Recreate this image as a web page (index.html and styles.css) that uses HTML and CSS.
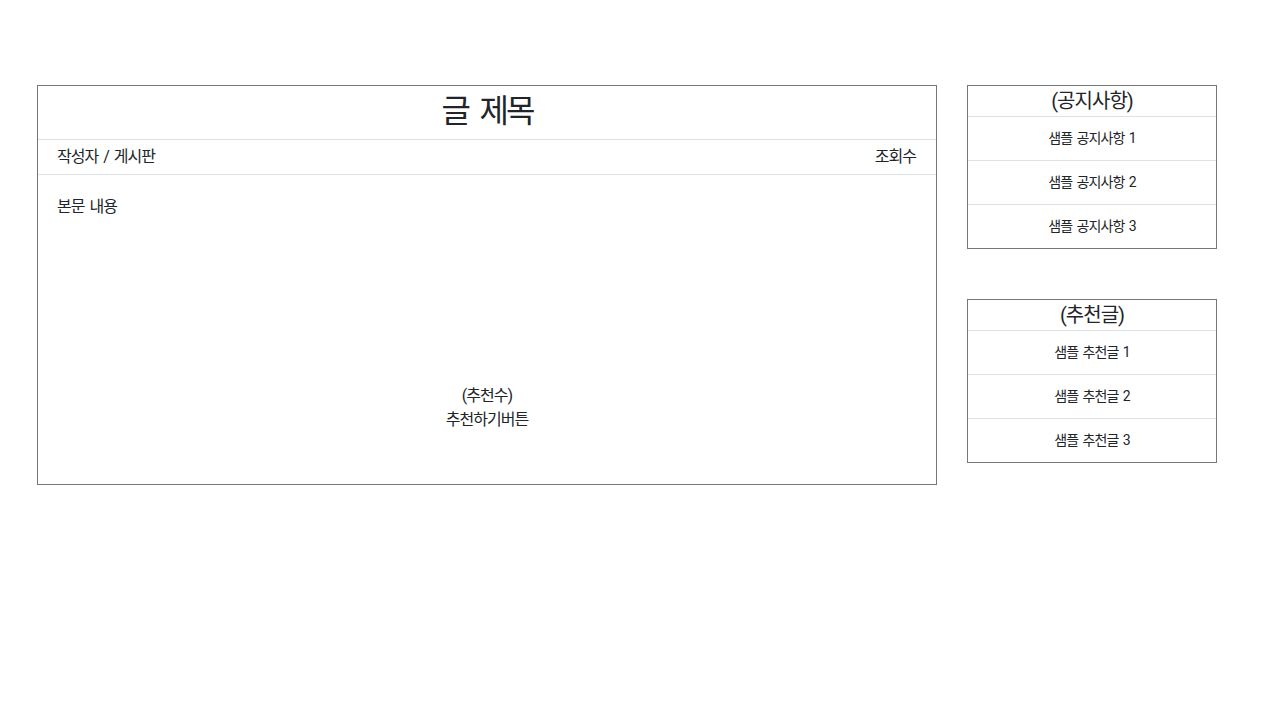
FILE: index.html
```html
<!DOCTYPE html>
<html lang="ko">
<head>
<meta charset="utf-8">
<title>글 제목</title>
<link rel="stylesheet" href="styles.css">
</head>
<body>
<div class="page">
  <main class="post">
    <div class="post-title">글 제목</div>
    <div class="post-meta">
      <span>작성자 / 게시판</span>
      <span>조회수</span>
    </div>
    <div class="post-body">
      <p class="post-text">본문 내용</p>
      <div class="recommend">
        <div>(추천수)</div>
        <div>추천하기버튼</div>
      </div>
    </div>
  </main>
  <aside class="sidebar">
    <section class="side-box">
      <div class="side-title">(공지사항)</div>
      <div class="side-item">샘플 공지사항 1</div>
      <div class="side-item">샘플 공지사항 2</div>
      <div class="side-item">샘플 공지사항 3</div>
    </section>
    <section class="side-box">
      <div class="side-title">(추천글)</div>
      <div class="side-item">샘플 추천글 1</div>
      <div class="side-item">샘플 추천글 2</div>
      <div class="side-item">샘플 추천글 3</div>
    </section>
  </aside>
</div>
</body>
</html>
```
FILE: styles.css
```css
* { box-sizing: border-box; }
html, body { margin: 0; padding: 0; background: #fff; }
body {
  font-family: Roboto, "Noto Sans CJK KR", sans-serif;
  color: #212529;
  font-size: 16px;
  line-height: 1.5;
  letter-spacing: -0.06em;
  word-spacing: 0.12em;
}
.page {
  display: flex;
  align-items: flex-start;
  gap: 30px;
  padding: 85px 0 0 37px;
}
.post {
  width: 900px;
  border: 1px solid #777;
}
.post-title {
  height: 54px;
  border-bottom: 1px solid #dee2e6;
  font-size: 32px;
  line-height: 50px;
  text-align: center;
  letter-spacing: -0.09em;
  word-spacing: 0.2em;
}
.post-meta {
  height: 35px;
  border-bottom: 1px solid #dee2e6;
  display: flex;
  justify-content: space-between;
  align-items: center;
  padding: 0 20px 0 19px;
}
.post-body {
  height: 309px;
  display: flex;
  flex-direction: column;
  padding: 20px 19px 52px;
}
.post-text { margin: 0; }
.recommend {
  margin-top: auto;
  text-align: center;
}
.sidebar {
  width: 250px;
  display: flex;
  flex-direction: column;
  gap: 50px;
}
.side-box {
  border: 1px solid #777;
}
.side-title {
  height: 31px;
  border-bottom: 1px solid #dee2e6;
  font-size: 20px;
  line-height: 30px;
  text-align: center;
}
.side-item {
  height: 44px;
  border-bottom: 1px solid #dee2e6;
  font-size: 14px;
  display: flex;
  align-items: center;
  justify-content: center;
}
.side-item:last-child { border-bottom: none; height: 43px; }
```
